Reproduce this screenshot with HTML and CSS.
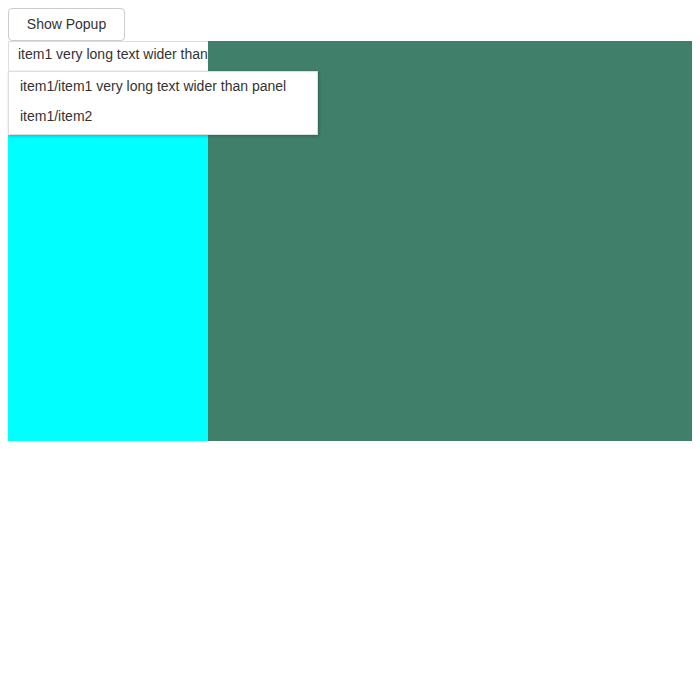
FILE: index.html
```html
<!DOCTYPE html>
<html>
<head>
<meta charset="utf-8">
<link rel="stylesheet" href="styles.css">
</head>
<body>
<button class="show-btn">Show Popup</button>
<div class="layout">
  <div class="side">
    <div class="menubar">
      <div class="menu-item">item1 very long text wider than panel</div>
    </div>
  </div>
  <div class="main"></div>
  <div class="popup">
    <div class="popup-item">item1/item1 very long text wider than panel</div>
    <div class="popup-item">item1/item2</div>
  </div>
</div>
</body>
</html>
```
FILE: styles.css
```css
html, body {
  margin: 0;
  padding: 0;
  background: #fff;
}
body {
  padding: 8px;
  font-family: "Liberation Sans", Arial, sans-serif;
  font-size: 14px;
  color: #333;
}
.show-btn {
  display: block;
  box-sizing: border-box;
  width: 117px;
  height: 33px;
  margin: 0;
  padding: 0 12px 1px;
  background: #fff;
  border: 1px solid #ccc;
  border-radius: 4px;
  font-family: "Liberation Sans", Arial, sans-serif;
  font-size: 14px;
  color: #333;
}
.layout {
  position: relative;
  display: flex;
  height: 400px;
}
.side {
  width: 200px;
  flex: none;
  background: #00ffff;
  overflow: hidden;
}
.menubar {
  box-sizing: border-box;
  height: 30px;
  background: #fff;
  border-top: 1px solid #ddd;
  border-left: 1px solid #ddd;
}
.menu-item {
  white-space: nowrap;
  padding: 0 9px;
  line-height: 24px;
}
.main {
  flex: 1;
  background: #40806a;
}
.popup {
  position: absolute;
  left: 0;
  top: 30px;
  box-sizing: border-box;
  width: 310px;
  padding: 0 0 2px;
  background: #fff;
  border: 1px solid #ddd;
  box-shadow: 1px 1px 3px rgba(0,0,0,0.25);
}
.popup-item {
  height: 30px;
  line-height: 28px;
  padding: 0 11px;
  white-space: nowrap;
}
```
